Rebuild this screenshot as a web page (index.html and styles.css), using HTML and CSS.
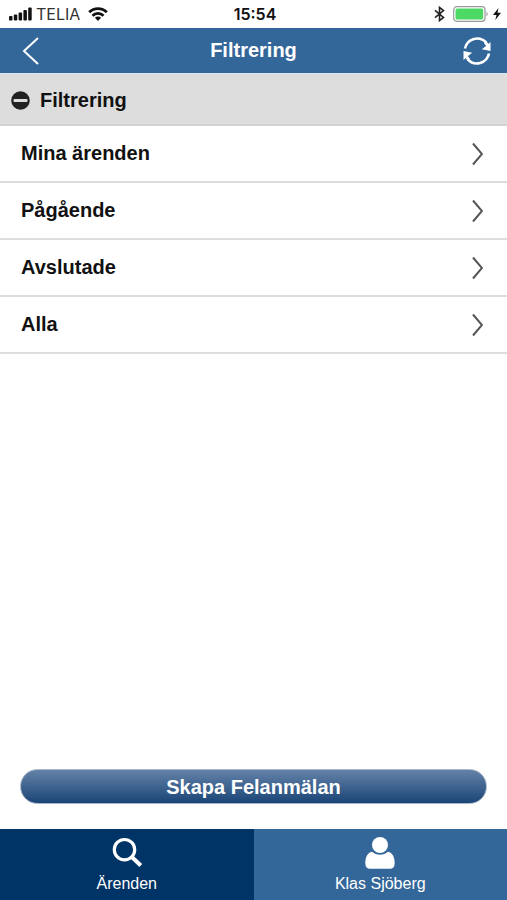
FILE: index.html
```html
<!DOCTYPE html>
<html lang="sv">
<head>
  <meta charset="UTF-8">
  <meta name="viewport" content="width=device-width, initial-scale=1.0">
  <title>Filtrering</title>
  <link rel="stylesheet" href="styles.css">
</head>
<body>
<div class="status-bar">
  <div class="status-left">
    <svg width="23" height="14" viewBox="0 0 23 14" fill="#111">
      <rect x="0" y="9" width="3.500" height="4.500" rx="1"/>
      <rect x="4.800" y="7.500" width="3.500" height="6" rx="1"/>
      <rect x="9.600" y="5.500" width="3.500" height="8" rx="1"/>
      <rect x="14.400" y="3" width="3.500" height="10.500" rx="1"/>
      <rect x="19.200" y="0.500" width="3.500" height="13" rx="1"/>
    </svg>
    <span class="carrier">TELIA</span>
    <svg class="wifi" width="20" height="14" viewBox="0 0 20 14" fill="none" stroke="#111" stroke-width="2.800">
      <path d="M1.200 5.200C6.200 0.400 13.800 0.400 18.800 5.200"/>
      <path d="M4.500 8.700C7.600 5.700 12.400 5.700 15.500 8.700"/>
      <path d="M10 14L6.900 10.800C8.700 9.200 11.300 9.200 13.100 10.800Z" fill="#111" stroke="none"/>
    </svg>
  </div>
  <span class="clock">15:54</span>
  <div class="status-right">
    <svg class="bluetooth" width="11" height="16" viewBox="0 0 11 16" fill="none" stroke="#222" stroke-width="1.600">
      <path d="M1 4.300L9.500 11.500L5.500 14.600V1.400L9.500 4.500L1 11.700"/>
    </svg>
    <svg width="36" height="16" viewBox="0 0 36 16">
      <rect x="0.700" y="0.700" width="31.300" height="14.600" rx="3" fill="#fff" stroke="#999" stroke-width="1.200"/>
      <rect x="2.500" y="2.500" width="27.700" height="11" rx="1.500" fill="#4cd964"/>
      <path d="M33.500 5.500Q36 8 33.500 10.500Z" fill="#999"/>
    </svg>
    <svg width="8" height="12" viewBox="0 0 8 12" fill="#111">
      <path d="M5.500 0L0 7H3.500L2.300 12L8 4.800H4.500Z"/>
    </svg>
  </div>
</div>

<header class="header">
  <button class="icon-button back" type="button" aria-label="Tillbaka">
    <svg width="18" height="28" viewBox="0 0 18 28" fill="none" stroke="#fff" stroke-width="2">
      <path d="M16 1L2 14L16 27"/>
    </svg>
  </button>
  <h1>Filtrering</h1>
  <button class="icon-button refresh" type="button" aria-label="Uppdatera">
    <svg width="28" height="28" viewBox="0 0 28 28" fill="none" stroke="#fff" stroke-width="2.600">
      <path d="M2 11.500A12.400 12.400 0 0 1 23.300 5.700"/>
      <path d="M26 16.500A12.400 12.400 0 0 1 4.700 22.300"/>
      <path d="M27.500 5V14L18.800 12.300L23 9Z" fill="#fff" stroke="none"/>
      <path d="M22 5L26 10" stroke-width="3"/>
      <path d="M0.500 23V14L9.200 15.700L5 19Z" fill="#fff" stroke="none"/>
      <path d="M6 23L2 18" stroke-width="3"/>
    </svg>
  </button>
</header>

<main>
  <h2 class="section-title">
    <svg width="19" height="19" viewBox="0 0 19 19">
      <circle cx="9.500" cy="9.500" r="9.300" fill="#222"/>
      <rect x="2.500" y="8" width="14" height="3" rx="1" fill="#ddd"/>
    </svg>
    Filtrering
  </h2>
  <ul class="filter-list">
    <li><a href="#mina">Mina ärenden
      <svg class="chevron" width="12" height="24" viewBox="0 0 12 24"><path d="M2 1.500L11 12L2 22.500"/></svg></a></li>
    <li><a href="#pagaende">Pågående
      <svg class="chevron" width="12" height="24" viewBox="0 0 12 24"><path d="M2 1.500L11 12L2 22.500"/></svg></a></li>
    <li><a href="#avslutade">Avslutade
      <svg class="chevron" width="12" height="24" viewBox="0 0 12 24"><path d="M2 1.500L11 12L2 22.500"/></svg></a></li>
    <li><a href="#alla">Alla
      <svg class="chevron" width="12" height="24" viewBox="0 0 12 24"><path d="M2 1.500L11 12L2 22.500"/></svg></a></li>
  </ul>
</main>

<div class="actions">
  <button class="create-button" type="button">Skapa Felanmälan</button>
</div>

<nav class="tab-bar">
  <a class="tab active" href="#arenden">
    <svg width="32" height="32" viewBox="0 0 32 32" fill="none" stroke="#fff">
      <circle cx="13.500" cy="12.700" r="10.200" stroke-width="3.200"/>
      <path d="M20.500 19.700L29.800 28.500" stroke-width="4"/>
    </svg>
    Ärenden
  </a>
  <a class="tab" href="#profil">
    <svg width="32" height="32" viewBox="0 0 32 32" fill="#fff">
      <circle cx="16" cy="8" r="8"/>
      <path d="M8 14.800C12.500 18.800 19.500 18.800 24 14.800C28.500 15.800 30.700 20 30.700 26.500C30.700 30 28.800 31.800 26 31.800H6C3.200 31.800 1.300 30 1.300 26.500C1.300 20 3.500 15.800 8 14.800Z"/>
    </svg>
    Klas Sjöberg
  </a>
</nav>
</body>
</html>
```
FILE: styles.css
```css
* {
  box-sizing: border-box;
}

body {
  display: flex;
  flex-direction: column;
  min-height: 100vh;
  margin: 0;
  background: #fff;
  color: #111;
  font-family: "Liberation Sans", Arial, sans-serif;
}

svg {
  display: block;
  flex-shrink: 0;
}

.status-bar {
  display: grid;
  grid-template-columns: 1fr auto 1fr;
  align-items: center;
  height: 28px;
  padding: 0 6px 0 9px;
  font-family: Inter, sans-serif;
  font-size: 16px;
}

.status-left,
.status-right {
  display: flex;
  align-items: center;
  gap: 4px;
}

.status-right {
  justify-content: flex-end;
}

.carrier {
  color: #333;
}

.wifi {
  margin-left: 4px;
}

.bluetooth {
  margin-right: 4px;
}

.clock {
  font-weight: 600;
}

.header {
  display: grid;
  grid-template-columns: 1fr auto 1fr;
  align-items: center;
  height: 45px;
  padding: 0 16px;
  background: #336699;
  color: #fff;
}

.header h1 {
  margin: 0;
  font-size: 20px;
}

.icon-button {
  padding: 0;
  border: none;
  background: none;
  cursor: pointer;
}

.back {
  justify-self: start;
  padding: 0 6px;
}

.refresh {
  justify-self: end;
}

main {
  flex: 1;
}

.section-title {
  display: flex;
  align-items: center;
  gap: 10px;
  height: 53px;
  margin: 0;
  padding: 2px 11px 0;
  border-top: 1px solid #dde6f2;
  border-bottom: 2px solid #d2d2d2;
  background: #dddddd;
  font-size: 20px;
}

.filter-list {
  margin: 0;
  padding: 0;
  list-style: none;
}

.filter-list a {
  display: flex;
  align-items: center;
  justify-content: space-between;
  height: 57px;
  padding: 0 24px 0 21px;
  border-bottom: 2px solid #dddddd;
  color: #111;
  font-size: 20px;
  font-weight: bold;
  text-decoration: none;
}

.chevron {
  fill: none;
  stroke: #555;
  stroke-width: 2;
}

.actions {
  padding: 0 20px 25px;
}

.create-button {
  width: 100%;
  height: 35px;
  padding: 2px 0 0;
  border: 1px solid #a9b6c6;
  border-radius: 18px;
  background: linear-gradient(#6482a8, #1a4577);
  color: #fff;
  font-family: inherit;
  font-size: 20px;
  font-weight: bold;
  cursor: pointer;
}

.tab-bar {
  display: flex;
  height: 71px;
}

.tab {
  display: flex;
  flex: 1;
  flex-direction: column;
  align-items: center;
  gap: 6px;
  padding-top: 8px;
  background: #336699;
  color: #fff;
  font-size: 16px;
  text-decoration: none;
}

.tab.active {
  background: #003366;
}
```
